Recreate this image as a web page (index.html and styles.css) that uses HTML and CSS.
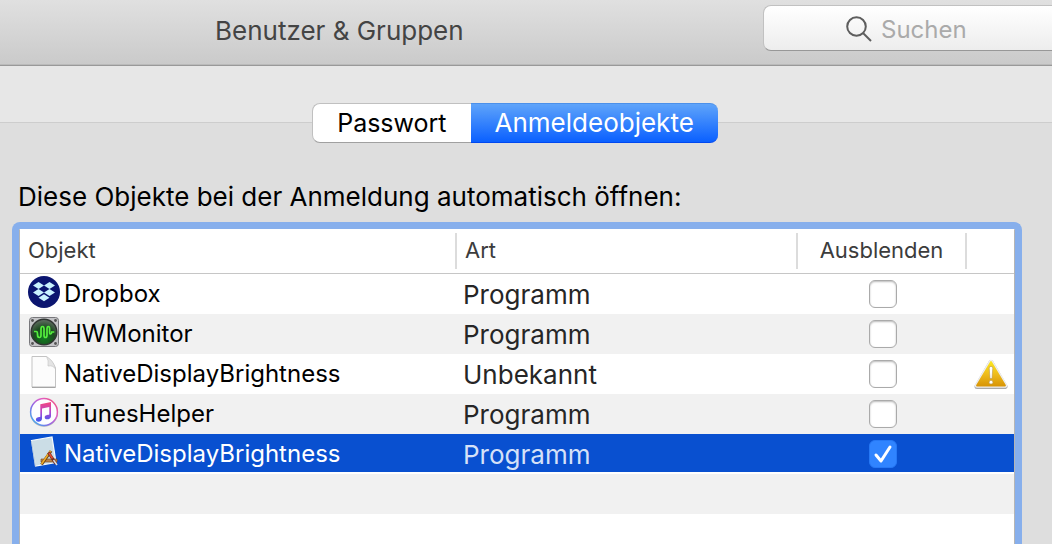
FILE: index.html
```html
<!DOCTYPE html>
<html lang="de">
<head>
<meta charset="utf-8">
<title>Benutzer &amp; Gruppen</title>
<link rel="stylesheet" href="styles.css">
</head>
<body>
<header class="toolbar">
  <h1 class="title">Benutzer &amp; Gruppen</h1>
  <label class="search">
    <svg class="search-icon" viewBox="0 0 26 26" aria-hidden="true"><circle cx="10.500" cy="10.500" r="9.300"/><path d="M17 17l8 8"/></svg>
    <input class="search-input" type="text" placeholder="Suchen" aria-label="Suchen">
  </label>
</header>
<main class="panel">
  <nav class="tabs">
    <button class="tab" type="button">Passwort</button>
    <button class="tab tab-active" type="button">Anmeldeobjekte</button>
  </nav>
  <p class="intro">Diese Objekte bei der Anmeldung automatisch öffnen:</p>
  <div class="list">
    <div class="scroll">
    <table class="items">
      <colgroup><col class="col-name"><col class="col-kind"><col class="col-hide"><col class="col-warn"></colgroup>
      <thead>
        <tr><th><span class="head">Objekt</span></th><th><span class="head">Art</span></th><th><span class="head head-center">Ausblenden</span></th><th><span class="head head-last"></span></th></tr>
      </thead>
      <tbody>
        <tr>
          <td><div class="name"><svg class="icon icon-high" viewBox="0 0 32 32" aria-hidden="true"><circle cx="16" cy="16" r="16" fill="#0b1570"/><path fill="#c9f2ff" d="M10.500 6l5.500 3.500-5.500 3.500L5 9.500zM21.500 6l5.500 3.500-5.500 3.500-5.500-3.500zM10.500 13l5.500 3.500-5.500 3.500L5 16.500zM21.500 13l5.500 3.500-5.500 3.500-5.500-3.500zM16 18.300l5.500 3.400-5.500 3.500-5.500-3.500z"/></svg>Dropbox</div></td>
          <td class="kind">Programm</td>
          <td class="hide"><input class="check" type="checkbox" aria-label="Dropbox ausblenden"></td><td></td>
        </tr>
        <tr>
          <td><div class="name"><svg class="icon icon-high" viewBox="0 0 32 32" aria-hidden="true">
            <defs><radialGradient id="dial" cx=".5" cy=".75" r=".7"><stop offset="0" stop-color="#117a20"/><stop offset=".6" stop-color="#1c4a20"/><stop offset="1" stop-color="#5a6a5c"/></radialGradient></defs>
            <rect x="1.500" y="1.500" width="29" height="29" rx="3" fill="#c4c4c7" stroke="#77777b"/>
            <g fill="#555"><circle cx="4.500" cy="4.500" r="1.400"/><circle cx="27.500" cy="4.500" r="1.400"/><circle cx="4.500" cy="27.500" r="1.400"/><circle cx="27.500" cy="27.500" r="1.400"/></g>
            <circle cx="16" cy="16" r="12.800" fill="url(#dial)" stroke="#303532" stroke-width="1.500"/>
            <path d="M6 15.500h2.500q1 0 1 3t1.800 3 1.700-2.500v-6q0-2.500 1.500-2.500t1.500 2.500v6q0 2.500 1.500 2.500t1.500-2.500v-6q0-2.500 1.300-2.500t1.300 2.500v3q0 2 1 2t1.200-2h2.500" fill="none" stroke="#55ef3d" stroke-width="1.700"/></svg>HWMonitor</div></td>
          <td class="kind">Programm</td>
          <td class="hide"><input class="check" type="checkbox" aria-label="HWMonitor ausblenden"></td><td></td>
        </tr>
        <tr>
          <td><div class="name"><svg class="icon icon-high" viewBox="0 0 32 32" aria-hidden="true"><path d="M4 .500h14.500Q25 5 27.500 12v19.200H4z" fill="#fcfcfc" stroke="#c3c3c3"/><path d="M4 31.300h23.500" stroke="#999"/><path d="M18.500.5q2.500 4 1.500 9.500 5-1 7.500 3Q26 5 18.500.5z" fill="#e4e4e4" stroke="#c6c6c6" stroke-width=".7"/></svg>NativeDisplayBrightness</div></td>
          <td class="kind">Unbekannt</td>
          <td class="hide"><input class="check" type="checkbox" aria-label="NativeDisplayBrightness (Unbekannt) ausblenden"></td>
          <td class="warn"><svg class="warn-icon" viewBox="0 0 34 32" role="img" aria-label="Warnung">
            <defs><linearGradient id="amber" x2="0" y2="1"><stop offset="0" stop-color="#fbe51f"/><stop offset=".5" stop-color="#efbd1c"/><stop offset="1" stop-color="#d99708"/></linearGradient></defs>
            <path d="M17 4.500L31 28.500H3z" fill="#aaa" stroke="#aaa" stroke-width="5" stroke-linejoin="round"/>
            <path d="M17 4L31 27.500H3z" fill="#eee" stroke="#eee" stroke-width="4.500" stroke-linejoin="round"/>
            <path d="M17 4L31 27.500H3z" fill="url(#amber)" stroke="url(#amber)" stroke-width="1.800" stroke-linejoin="round"/>
            <path d="M15.200 10q0-1.600 1.800-1.600t1.800 1.600l-.8 10.500h-2z" fill="#fff" stroke="#b8984b" stroke-width=".6"/><circle cx="17" cy="24.200" r="1.900" fill="#fff" stroke="#b8984b" stroke-width=".6"/></svg></td>
        </tr>
        <tr>
          <td><div class="name"><svg class="icon icon-high" viewBox="0 0 32 32" aria-hidden="true">
            <defs><linearGradient id="ring" x1="1" x2="0" y2=".9"><stop offset="0" stop-color="#f0506e"/><stop offset=".35" stop-color="#e060c8"/><stop offset=".65" stop-color="#8a68e8"/><stop offset="1" stop-color="#38b8ee"/></linearGradient><linearGradient id="note" x2="0" y2="1"><stop offset="0" stop-color="#f7467a"/><stop offset=".5" stop-color="#b445cf"/><stop offset="1" stop-color="#3d5bf0"/></linearGradient></defs>
            <circle cx="16" cy="16.800" r="14" fill="#bbb"/><circle cx="16" cy="16" r="13.400" fill="#fdfdff" stroke="url(#ring)" stroke-width="1.500"/>
            <path fill="url(#note)" d="M12.300 8.200L23 6v14.200c0 3.800-6.300 4-6.300 1.200 0-2.500 3-2.200 4.600-2.900V11L14 12.500v10.300c0 3.500-6.100 3.700-6.100 1 0-2.500 2.900-2.400 4.400-3z"/></svg>iTunesHelper</div></td>
          <td class="kind">Programm</td>
          <td class="hide"><input class="check" type="checkbox" aria-label="iTunesHelper ausblenden"></td><td></td>
        </tr>
        <tr class="selected">
          <td><div class="name"><svg class="icon icon-high" viewBox="0 0 32 32" aria-hidden="true">
            <path d="M3.500 4.500L24 1l4 25.500L7.500 30z" fill="#cbdde6" stroke="#f6fafc" stroke-width="1.200"/>
            <path d="M3.500 5L7.500 30.500" stroke="#8ba9c5" stroke-width=".6"/>
            <path d="M13 23h16v3H13z" fill="#bd8549" stroke="#754319" stroke-width=".6"/>
            <path d="M23 15L13.500 28.500" stroke="#694015" stroke-width="3"/><path d="M22.500 15L13.500 28" stroke="#efac27" stroke-width="1.700"/>
            <path d="M20.500 16.500L28 28" stroke="#6d2c24" stroke-width="3"/><path d="M21 17l3.500 5.500" stroke="#e34e35" stroke-width="1.600"/><path d="M25.500 24l3.500 5" stroke="#ddd" stroke-width="1.500"/></svg>NativeDisplayBrightness</div></td>
          <td class="kind">Programm</td>
          <td class="hide"><input class="check" type="checkbox" checked aria-label="NativeDisplayBrightness (Programm) ausblenden"></td><td></td>
        </tr>
        <tr><td></td><td></td><td></td><td></td></tr>
      </tbody>
    </table>
    </div>
  </div>
</main>
</body>
</html>
```
FILE: styles.css
```css
* { box-sizing: border-box; }
body {
  display: flex;
  flex-direction: column;
  height: 100vh;
  margin: 0;
  overflow: hidden;
  background: #e7e7e7;
  color: #000;
  font: 24px/32px Inter, "Liberation Sans", sans-serif;
}
.toolbar {
  display: flex;
  flex: none;
  justify-content: space-between;
  height: 66px;
  padding: 5px 0 0 215px;
  background: linear-gradient(#e0e0e0, #cacaca);
  border-bottom: 1px solid #999;
  box-shadow: inset 0 -1px #bababa;
}
.title {
  margin: 10px 0 0;
  color: #444;
  font-size: 26px;
  font-weight: 400;
}
.search {
  display: flex;
  align-items: center;
  gap: 9px;
  width: 289px;
  height: 46px;
  padding-left: 82px;
  background: linear-gradient(#fff, #ededed);
  border: 1px solid #c1c1c1;
  border-right: 0;
  border-bottom-color: #989898;
  border-radius: 8px 0 0 8px;
}
.search-icon {
  flex: none;
  width: 26px;
  height: 26px;
  margin-top: 2px;
  fill: none;
  stroke: #5e5e5e;
  stroke-width: 2;
}
.search-input {
  width: 100%;
  min-width: 0;
  padding: 4px 0 0;
  border: 0;
  outline: 0;
  background: none;
  font: inherit;
}
.search-input::placeholder { color: #aaa; opacity: 1; }
.panel {
  display: flex;
  flex: 1;
  flex-direction: column;
  min-height: 0;
  margin-top: 56px;
  padding: 0 30px 0 12px;
  background: #dedede;
  border-top: 1px solid #cdcdcd;
}
.tabs {
  display: flex;
  align-self: center;
  margin: -20px 4px 0 0;
  border-radius: 8px;
}
.tab {
  height: 40px;
  padding: 0 24px;
  background: #fff;
  border: 1px solid #c0c0c0;
  border-right: 0;
  border-bottom-color: #a0a0a0;
  border-radius: 8px 0 0 8px;
  color: #000;
  font: inherit;
  font-size: 25px;
}
.tab-active {
  background: linear-gradient(#5fa4fa, #0a60ff);
  border: 0;
  border-top: 1px solid #4b90ea;
  border-bottom: 1px solid #0048f0;
  border-radius: 0 8px 8px 0;
  color: #fff;
  font-size: 26px;
}
.intro {
  margin: 38px 6px 9px;
  font-size: 26px;
}
.list {
  flex: 1;
  min-height: 0;
  overflow: hidden;
  background: #fff;
  border: 7px solid #87afec;
  border-bottom: 0;
  border-radius: 8px 8px 0 0;
}
.scroll {
  height: 100%;
  border: solid #b5b5b5;
  border-width: 0 1px;
}
.items {
  width: 100%;
  border-spacing: 0;
  table-layout: fixed;
}
.col-kind { width: 341px; }
.col-hide { width: 169px; }
.col-warn { width: 47px; }
.items th {
  height: 45px;
  padding: 0;
  border-bottom: 1px solid #c6c6c6;
  color: #3c3c3c;
  font-size: 22px;
  font-weight: 400;
  text-align: left;
}
.head {
  display: block;
  height: 36px;
  padding-left: 8px;
  border-right: 2px solid #dcdcdc;
  line-height: 34px;
}
.head-center { padding: 0; text-align: center; }
.head-last { border: 0; }
.items td { height: 40px; padding: 0; }
.items tbody tr:nth-child(even) { background: #f1f1f1; }
.name {
  display: flex;
  align-items: center;
  gap: 4px;
  padding-left: 8px;
}
.icon { flex: none; width: 32px; height: 32px; }
.icon-high { margin-bottom: 4px; }
.items .kind { padding: 2px 0 0 6px; color: #262626; font-size: 26px; }
.hide, .warn { text-align: center; }
.warn-icon { display: block; width: 34px; height: 32px; margin: auto; }
.check {
  display: block;
  width: 28px;
  height: 28px;
  margin: auto;
  appearance: none;
  background: #fff;
  border: 1px solid #aaa;
  border-radius: 6px;
  box-shadow: inset 0 1px 2px #bbb;
}
.check:checked {
  background: #3084ff url("data:image/svg+xml,%3Csvg xmlns='http://www.w3.org/2000/svg' viewBox='0 0 28 28'%3E%3Cpath d='M7 15l5 6L21 7' fill='none' stroke='white' stroke-width='3' stroke-linecap='round' stroke-linejoin='round'/%3E%3C/svg%3E") center / 28px;
  border-color: #2678f5;
  box-shadow: none;
}
.items .selected {
  background: linear-gradient(#0950d0, #0950d0) top / 100% 38px no-repeat;
  color: #fff;
}
.items .selected .kind { color: #d5e1f8; }
```
